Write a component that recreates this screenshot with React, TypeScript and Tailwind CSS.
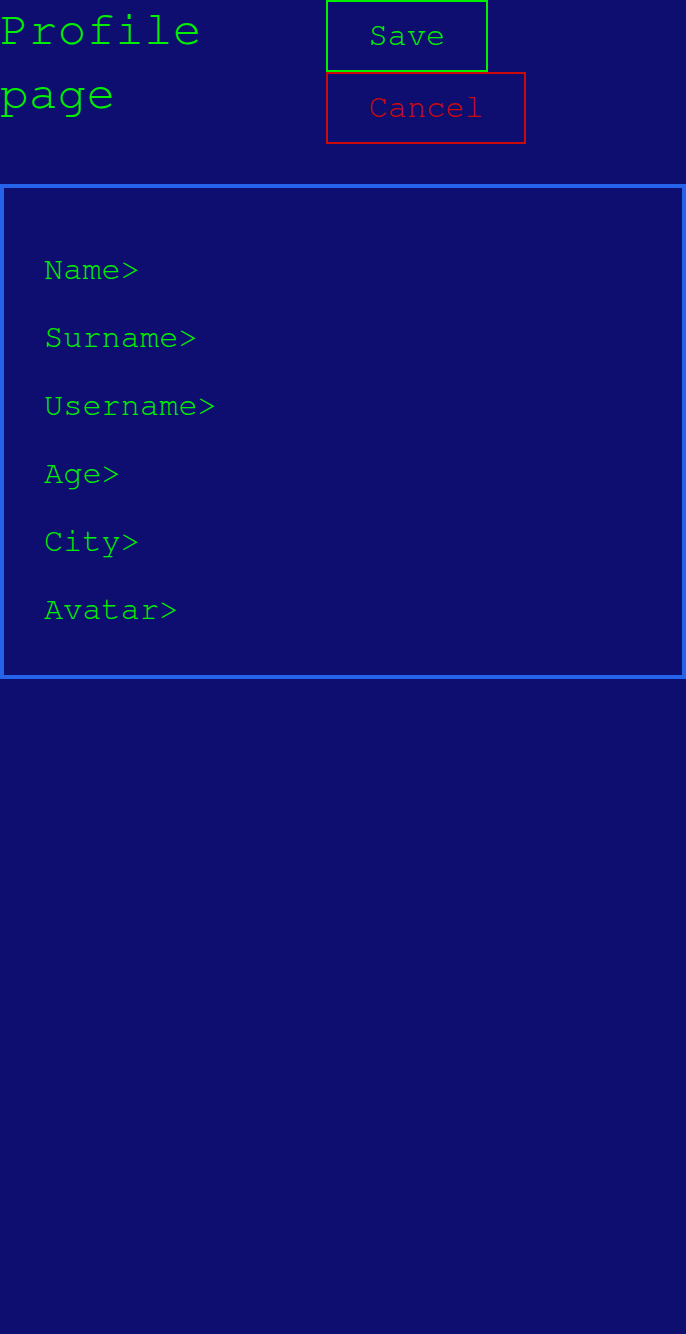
const fields = ["Name>", "Surname>", "Username>", "Age>", "City>", "Avatar>"];

export default function App() {
  return (
    <div className="min-h-[1334px] bg-[#0e0e70] font-['FreeMono','Liberation_Mono',monospace] text-[#00f000]">
      <div className="flex items-start">
        <h1 className="-mt-0.5 w-[326px] text-[48px] leading-[64px] font-normal">Profile page</h1>
        <div className="flex flex-col items-start">
          <button className="border-2 border-[#00f000] px-[40.5px] pt-[15px] pb-[17px] text-[32px] leading-[36px] text-[#00f000]">
            Save
          </button>
          <button className="border-2 border-[#cc0a0a] px-[40.5px] pt-[15px] pb-[17px] text-[32px] leading-[36px] text-[#cc0a0a]">
            Cancel
          </button>
        </div>
      </div>
      <div className="mt-10 border-4 border-[#2563eb] px-10 pt-[63px] pb-[48px]">
        <div className="flex flex-col gap-8">
          {fields.map((f) => (
            <div key={f} className="text-[32px] leading-[36px]">
              {f}
            </div>
          ))}
        </div>
      </div>
    </div>
  );
}
